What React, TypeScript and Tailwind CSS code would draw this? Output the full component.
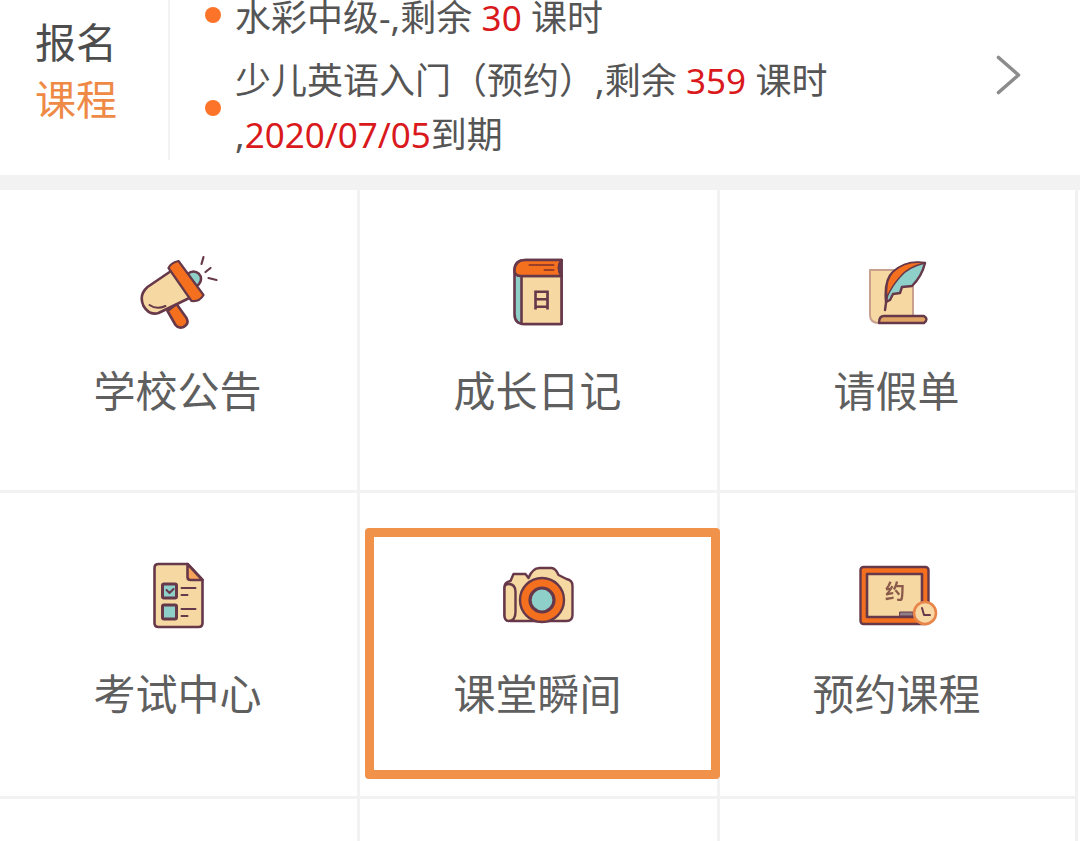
/**
 * App - school portal home: enrolled courses summary and feature grid
 */

import type { ReactNode } from "react";

const line = "#66384a";
const tan = "#f6d9a2";
const orange = "#f4701f";
const teal = "#8ecfc9";

function Megaphone() {
  return (
    <svg width="80" height="80" viewBox="138.5 252 80 80" className="blur-[0.5px]" fill="none" stroke={line} strokeWidth="2.6" strokeLinecap="round" strokeLinejoin="round">
      <path d="M167 311 L176 304 L186 318 Q189 324 183 327 Q178 329 175 325 Z" fill={orange} />
      <circle cx="193" cy="279" r="7.5" fill={teal} />
      <path d="M172 270 L193 296 L158 313 Q149 316 143 306 Q138 295 147 287 Z" fill={tan} />
      <path d="M178 261 Q170 263 168 268 L191 301 Q199 302 203 295 Z" fill={orange} strokeWidth="2.2" />
      <path d="M149 305 Q156 310 165 306" strokeWidth="2" />
      <path d="M201 264 L203 257 M205 272 L210 268 M208 278 L216 280" strokeWidth="2.2" />
    </svg>
  );
}

function Book() {
  return (
    <svg width="80" height="80" viewBox="498.5 252 80 80" className="blur-[0.5px]" fill="none" stroke={line} strokeWidth="2.6" strokeLinejoin="round" strokeLinecap="round">
      <path d="M525 260 L561 260 L561 324 L524 324 Q514 324 514 314 L514 271 Q514 260 525 260 Z" fill={teal} />
      <path d="M521 276 L561 276 L561 324 L521 324 Z" fill={tan} />
      <path d="M561 260 L525 260 Q514 260 514 271 Q514 276 521 276 L561 276 Q556 268 561 260 Z" fill={orange} />
      <path d="M561 260 Q556 268 561 276 Z" fill={teal} />
      <path d="M529 265 L553 265 M544 270 L553 270" strokeWidth="2" stroke="#9a3f28" />
      <text x="541" y="307" fontSize="21" textAnchor="middle" fill={line} stroke="none" fontWeight="700" fontFamily="'Noto Sans CJK SC', sans-serif">日</text>
    </svg>
  );
}

function Quill() {
  return (
    <svg width="80" height="80" viewBox="858 252 80 80" className="blur-[0.5px]" fill="none" stroke={line} strokeWidth="2.4" strokeLinejoin="round" strokeLinecap="round">
      <path d="M870 270 L913 270 L913 316 L884 316 Q879 316 879 323 Q870 323 870 315 Z" fill={tan} stroke="#c9a08e" strokeWidth="2" />
      <path d="M879 323 Q879 316 884 316 L924 316 Q929 319 924 323 Z" fill="#e0a463" />
      <path d="M886 302 Q884 280 893 272 Q906 260 925 263 Q922 276 912 286 L902 287 L900 293 L893 294 L890 300 Z" fill={teal} />
      <path d="M887 297 Q885 281 893 272 Q906 260 925 263 Q908 267 900 277 Q892 286 887 297 Z" fill={orange} strokeWidth="1.4" />
      <path d="M885 310 L887 296" />
    </svg>
  );
}

function ExamSheet() {
  return (
    <svg width="80" height="80" viewBox="138.5 555 80 80" className="blur-[0.5px]" fill="none" stroke={line} strokeWidth="2.6" strokeLinejoin="round" strokeLinecap="round">
      <path d="M158 564 L187 564 L202 580 L202 623 Q202 627 198 627 L158 627 Q154 627 154 623 L154 568 Q154 564 158 564 Z" fill={tan} />
      <path d="M187 564 L202 580 L190 580 Q187 580 187 577 Z" fill="#f7a35c" />
      <rect x="162" y="584" width="14" height="14" rx="1.5" fill={teal} strokeWidth="3" />
      <path d="M166 590 L169 593 L173 589" strokeWidth="2" />
      <rect x="162" y="605" width="14" height="14" rx="1.5" fill={teal} strokeWidth="3" />
      <path d="M181 588 L195 588 M181 595 L187 595 M181 609 L195 609 M181 616 L187 616" strokeWidth="2" />
    </svg>
  );
}

function Camera() {
  return (
    <svg width="80" height="80" viewBox="498.5 555 80 80" className="blur-[0.5px]" fill="none" stroke={line} strokeWidth="2.4" strokeLinejoin="round" strokeLinecap="round">
      <path d="M513 574 L525 574 L528 578 Q532 568 539 568 L551 568 Q555 568 558 575 L566 579 Q572 580 572 586 L572 615 Q572 621 566 621 L510 621 Q504 621 504 615 L504 587 Q504 582 510 581 Z" fill={tan} />
      <path d="M508 584 Q515 584 515 592 L515 612 Q515 621 508 621 Q504 621 504 615 L504 588 Q504 584 508 584 Z" fill={tan} />
      <circle cx="541.5" cy="600" r="22" fill={orange} />
      <circle cx="541.5" cy="600" r="12" fill={teal} strokeWidth="3.2" />
    </svg>
  );
}

function Blackboard() {
  return (
    <svg width="80" height="80" viewBox="858 555 80 80" className="blur-[0.5px]" fill="none" stroke={line} strokeWidth="2.4" strokeLinejoin="round" strokeLinecap="round">
      <rect x="860.5" y="567" width="68" height="57" rx="3" fill={orange} />
      <rect x="867" y="574" width="55" height="43" fill={tan} strokeWidth="2.6" />
      <text x="895" y="599" fontSize="20" textAnchor="middle" fill="#8a5a4a" stroke="none" fontWeight="700" fontFamily="'Noto Sans CJK SC', sans-serif">约</text>
      <rect x="900" y="612" width="13" height="4" fill="#8f7f87" strokeWidth="1" />
      <circle cx="925" cy="613" r="11" fill="#f8d9a6" stroke="#e8854a" strokeWidth="2.6" />
      <path d="M922 608 L924 615 L930 615" strokeWidth="2" />
    </svg>
  );
}

function Cell({ icon, label, children }: { icon?: ReactNode; label?: string; children?: ReactNode }) {
  return (
    <div className="relative border-r-[3px] border-b-[3px] border-[#f2f2f2] flex flex-col items-center pt-[62px]">
      {icon}
      {label && (
        <div className="mt-[35px] h-12 -ml-[2px] text-[42px] leading-[48px] text-[#5f5f5f]">{label}</div>
      )}
      {children}
    </div>
  );
}

export default function App() {
  return (
    <div
      className="w-[1080px] h-[841px] overflow-hidden bg-white"
      style={{ fontFamily: "'Noto Sans', 'Noto Sans CJK SC', sans-serif" }}
    >
      {/* Enrolled courses */}
      <div className="h-[175px] flex items-start overflow-hidden">
        <div className="w-[170px] h-40 shrink-0 border-r-2 border-[#f2f2f2] pl-[35px] pt-[14px] text-[41px] leading-[57px]">
          <div className="text-[#4d4d4d]">报名</div>
          <div className="text-[#ee8a45]">课程</div>
        </div>
        <div className="h-[162px] flex-1 flex flex-col justify-end gap-[9px] pl-[35px] text-[36px] leading-[54px] text-[#555]">
          <div className="flex items-center gap-[14px]">
            <span className="w-4 h-4 rounded-full bg-[#fc7429] shrink-0 -mt-[6px]" />
            <div>
              水彩中级-,剩余 <span className="text-[35px] text-[#d9191c]">30</span> 课时
            </div>
          </div>
          <div className="flex items-center gap-[14px]">
            <span className="w-4 h-4 rounded-full bg-[#fc7429] shrink-0" />
            <div className="w-[640px]">
              少儿英语入门（预约）,剩余 <span className="text-[35px] text-[#d9191c]">359</span> 课时 ,
              <span className="text-[35px] text-[#d9191c]">2020/07/05</span>到期
            </div>
          </div>
        </div>
        <svg width="32" height="44" viewBox="0 0 32 44" fill="none" className="shrink-0 mt-[53px] mr-[56px] blur-[0.5px]" stroke="#8c8c8c" strokeWidth="3.6" strokeLinecap="round" strokeLinejoin="round">
          <path d="M6.5 4.5 L26.5 22 L6.5 39.5" />
        </svg>
      </div>
      <div className="h-[15px] bg-[#f2f2f2]" />

      {/* Feature grid */}
      <div className="grid grid-cols-[360px_360px_358px] grid-rows-[303px_306px_303px]">
        <Cell icon={<Megaphone />} label="学校公告" />
        <Cell icon={<Book />} label="成长日记" />
        <Cell icon={<Quill />} label="请假单" />
        <Cell icon={<ExamSheet />} label="考试中心" />
        <Cell icon={<Camera />} label="课堂瞬间">
          <div className="absolute left-[5px] top-[35px] w-[355px] h-[251px] border-[9px] border-[#f0924a] rounded-[4px]" />
        </Cell>
        <Cell icon={<Blackboard />} label="预约课程" />
        <Cell />
        <Cell />
        <Cell />
      </div>
    </div>
  );
}
